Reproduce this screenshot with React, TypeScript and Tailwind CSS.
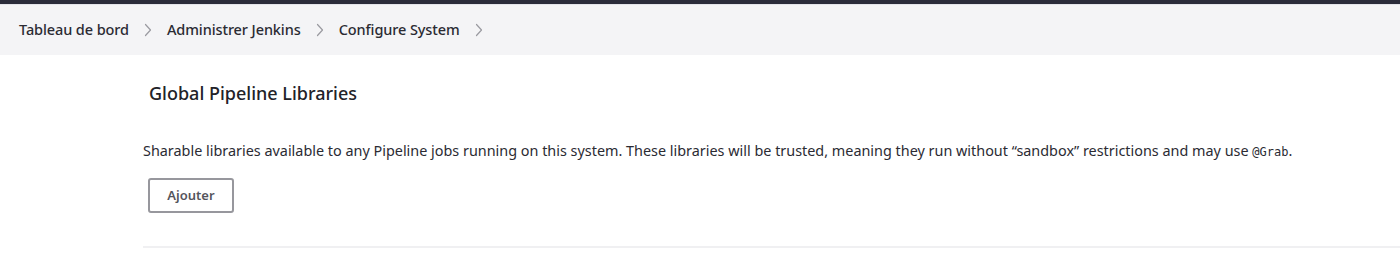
function Chevron() {
    return (
        <svg width="8" height="14" viewBox="0 0 8 14" fill="none" className="text-[#9a9aa0]">
            <path d="M1.5 1.5 L6.5 7 L1.5 12.5" stroke="currentColor" strokeWidth="1.2" strokeLinecap="round" strokeLinejoin="round" />
        </svg>
    );
}

const crumbs = ['Tableau de bord', 'Administrer Jenkins', 'Configure System'];

export default function App() {
    return (
        <div className="w-[1400px] h-[259px] bg-white font-['Noto_Sans',sans-serif] overflow-hidden">
            {/* Top bar */}
            <div className="h-[4px] bg-[#2b2c3a]"></div>
            <div className="h-px bg-[#e4e4ea]"></div>

            {/* Breadcrumbs */}
            <div className="h-[50px] bg-[#f4f4f6] flex items-center pl-[19px] gap-[15px]">
                {crumbs.map((c) => (
                    <div key={c} className="flex items-center gap-[15px]">
                        <span className="text-[14.5px] font-medium text-[#2b2b33] tracking-[-0.1px]">{c}</span>
                        <Chevron />
                    </div>
                ))}
            </div>

            {/* Section */}
            <div className="pl-[143px]">
                <h2 className="pl-[6px] pt-[25px] text-[18px] font-medium text-[#222228] leading-[26px]">
                    Global Pipeline Libraries
                </h2>
                <p className="mt-[35px] text-[14.4px] text-[#2b2b33] leading-[20px]">
                    Sharable libraries available to any Pipeline jobs running on this system. These libraries will be trusted, meaning they run without “sandbox” restrictions and may use{' '}
                    <code className="font-['DejaVu_Sans_Mono',monospace] text-[12px]">@Grab</code>.
                </p>
                <button className="mt-[16px] ml-[5px] w-[86px] h-[35px] border-2 border-[#97979d] rounded-[3px] bg-white text-[13px] font-semibold text-[#55555c]">
                    Ajouter
                </button>
                <div className="mt-[33px] h-[2px] bg-[#f0f0f2]"></div>
            </div>
        </div>
    );
}
